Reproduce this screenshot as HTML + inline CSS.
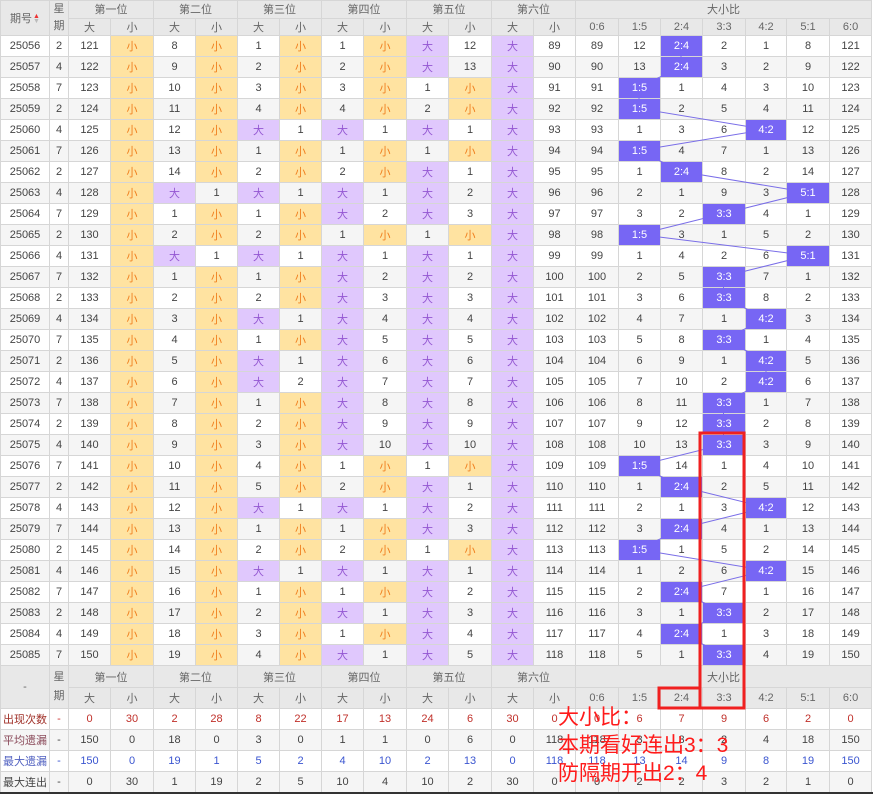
<!DOCTYPE html>
<html><head><meta charset="utf-8">
<style>
html,body{margin:0;padding:0;background:#fff;width:873px;height:794px;overflow:hidden;position:relative}
table{position:absolute;left:0;top:0;width:871px;border-collapse:collapse;table-layout:fixed;font-family:"Liberation Sans","Noto Sans CJK SC",sans-serif;font-size:11px;color:#444}
td{border:1px solid #d6d6d6;text-align:center;padding:0;height:20px;overflow:hidden;white-space:nowrap}
tr.hd td{background:#e8e8e8;color:#666;height:16px}
tr.hd2 td{background:#e8e8e8;color:#666;height:16px}
tr.bh td{background:#e8e8e8;color:#666;height:21px}
tr.bh2 td{background:#e8e8e8;color:#666;height:20px}
tbody.d tr:nth-child(even) td{background:#f5f5f5}
tbody.d tr td.s{background:#ffe3a1;color:#f08020}
tbody.d tr td.b{background:#e0c8fd;color:#9457d2}
tbody.d tr td.h{background:#7766f4;color:#fff;position:relative;z-index:3}
tr.g td{border-top:1px solid #aaa}
col.gl{border-left:1px solid #b8b8b8}
tr.st td{height:20px}
tr.st:nth-child(even) td{background:#f5f5f5}
.r1 td{color:#c0302a}.r1 td:first-child{color:#a03028}
.r2 td:first-child{color:#8a4a5a}
.r3 td{color:#3a55d0}.r3 td:first-child{color:#5060c0}
.dash{color:#c33 !important}
.arr{display:inline-block;vertical-align:middle;margin-left:1px;font-size:7px;line-height:5px;color:#bbb}
.arr b{display:block;color:#e33;font-weight:normal}
</style></head><body>
<table>
<colgroup>
<col style="width:49px"><col class="gl" style="width:19px">
<col class="gl" style="width:42px"><col style="width:43px">
<col class="gl" style="width:42px"><col style="width:42px">
<col class="gl" style="width:42px"><col style="width:42px">
<col class="gl" style="width:42px"><col style="width:43px">
<col class="gl" style="width:42px"><col style="width:43px">
<col class="gl" style="width:42px"><col style="width:42px">
<col class="gl" style="width:43px"><col style="width:42px"><col style="width:42px"><col style="width:43px"><col style="width:41px"><col style="width:43px"><col style="width:42px">
</colgroup>
<tbody>
<tr class="hd"><td rowspan="2">期号<span class="arr"><b>▲</b>▼</span></td><td rowspan="2" style="line-height:17px">星<br>期</td><td colspan="2">第一位</td><td colspan="2">第二位</td><td colspan="2">第三位</td><td colspan="2">第四位</td><td colspan="2">第五位</td><td colspan="2">第六位</td><td colspan="7">大小比</td></tr>
<tr class="hd2"><td>大</td><td>小</td><td>大</td><td>小</td><td>大</td><td>小</td><td>大</td><td>小</td><td>大</td><td>小</td><td>大</td><td>小</td><td>0:6</td><td>1:5</td><td>2:4</td><td>3:3</td><td>4:2</td><td>5:1</td><td>6:0</td></tr>
</tbody>
<tbody class="d">
<tr><td>25056</td><td>2</td><td>121</td><td class="s">小</td><td>8</td><td class="s">小</td><td>1</td><td class="s">小</td><td>1</td><td class="s">小</td><td class="b">大</td><td>12</td><td class="b">大</td><td>89</td><td>89</td><td>12</td><td class="h">2:4</td><td>2</td><td>1</td><td>8</td><td>121</td></tr>
<tr><td>25057</td><td>4</td><td>122</td><td class="s">小</td><td>9</td><td class="s">小</td><td>2</td><td class="s">小</td><td>2</td><td class="s">小</td><td class="b">大</td><td>13</td><td class="b">大</td><td>90</td><td>90</td><td>13</td><td class="h">2:4</td><td>3</td><td>2</td><td>9</td><td>122</td></tr>
<tr><td>25058</td><td>7</td><td>123</td><td class="s">小</td><td>10</td><td class="s">小</td><td>3</td><td class="s">小</td><td>3</td><td class="s">小</td><td>1</td><td class="s">小</td><td class="b">大</td><td>91</td><td>91</td><td class="h">1:5</td><td>1</td><td>4</td><td>3</td><td>10</td><td>123</td></tr>
<tr><td>25059</td><td>2</td><td>124</td><td class="s">小</td><td>11</td><td class="s">小</td><td>4</td><td class="s">小</td><td>4</td><td class="s">小</td><td>2</td><td class="s">小</td><td class="b">大</td><td>92</td><td>92</td><td class="h">1:5</td><td>2</td><td>5</td><td>4</td><td>11</td><td>124</td></tr>
<tr><td>25060</td><td>4</td><td>125</td><td class="s">小</td><td>12</td><td class="s">小</td><td class="b">大</td><td>1</td><td class="b">大</td><td>1</td><td class="b">大</td><td>1</td><td class="b">大</td><td>93</td><td>93</td><td>1</td><td>3</td><td>6</td><td class="h">4:2</td><td>12</td><td>125</td></tr>
<tr class="g"><td>25061</td><td>7</td><td>126</td><td class="s">小</td><td>13</td><td class="s">小</td><td>1</td><td class="s">小</td><td>1</td><td class="s">小</td><td>1</td><td class="s">小</td><td class="b">大</td><td>94</td><td>94</td><td class="h">1:5</td><td>4</td><td>7</td><td>1</td><td>13</td><td>126</td></tr>
<tr><td>25062</td><td>2</td><td>127</td><td class="s">小</td><td>14</td><td class="s">小</td><td>2</td><td class="s">小</td><td>2</td><td class="s">小</td><td class="b">大</td><td>1</td><td class="b">大</td><td>95</td><td>95</td><td>1</td><td class="h">2:4</td><td>8</td><td>2</td><td>14</td><td>127</td></tr>
<tr><td>25063</td><td>4</td><td>128</td><td class="s">小</td><td class="b">大</td><td>1</td><td class="b">大</td><td>1</td><td class="b">大</td><td>1</td><td class="b">大</td><td>2</td><td class="b">大</td><td>96</td><td>96</td><td>2</td><td>1</td><td>9</td><td>3</td><td class="h">5:1</td><td>128</td></tr>
<tr><td>25064</td><td>7</td><td>129</td><td class="s">小</td><td>1</td><td class="s">小</td><td>1</td><td class="s">小</td><td class="b">大</td><td>2</td><td class="b">大</td><td>3</td><td class="b">大</td><td>97</td><td>97</td><td>3</td><td>2</td><td class="h">3:3</td><td>4</td><td>1</td><td>129</td></tr>
<tr><td>25065</td><td>2</td><td>130</td><td class="s">小</td><td>2</td><td class="s">小</td><td>2</td><td class="s">小</td><td>1</td><td class="s">小</td><td>1</td><td class="s">小</td><td class="b">大</td><td>98</td><td>98</td><td class="h">1:5</td><td>3</td><td>1</td><td>5</td><td>2</td><td>130</td></tr>
<tr class="g"><td>25066</td><td>4</td><td>131</td><td class="s">小</td><td class="b">大</td><td>1</td><td class="b">大</td><td>1</td><td class="b">大</td><td>1</td><td class="b">大</td><td>1</td><td class="b">大</td><td>99</td><td>99</td><td>1</td><td>4</td><td>2</td><td>6</td><td class="h">5:1</td><td>131</td></tr>
<tr><td>25067</td><td>7</td><td>132</td><td class="s">小</td><td>1</td><td class="s">小</td><td>1</td><td class="s">小</td><td class="b">大</td><td>2</td><td class="b">大</td><td>2</td><td class="b">大</td><td>100</td><td>100</td><td>2</td><td>5</td><td class="h">3:3</td><td>7</td><td>1</td><td>132</td></tr>
<tr><td>25068</td><td>2</td><td>133</td><td class="s">小</td><td>2</td><td class="s">小</td><td>2</td><td class="s">小</td><td class="b">大</td><td>3</td><td class="b">大</td><td>3</td><td class="b">大</td><td>101</td><td>101</td><td>3</td><td>6</td><td class="h">3:3</td><td>8</td><td>2</td><td>133</td></tr>
<tr><td>25069</td><td>4</td><td>134</td><td class="s">小</td><td>3</td><td class="s">小</td><td class="b">大</td><td>1</td><td class="b">大</td><td>4</td><td class="b">大</td><td>4</td><td class="b">大</td><td>102</td><td>102</td><td>4</td><td>7</td><td>1</td><td class="h">4:2</td><td>3</td><td>134</td></tr>
<tr><td>25070</td><td>7</td><td>135</td><td class="s">小</td><td>4</td><td class="s">小</td><td>1</td><td class="s">小</td><td class="b">大</td><td>5</td><td class="b">大</td><td>5</td><td class="b">大</td><td>103</td><td>103</td><td>5</td><td>8</td><td class="h">3:3</td><td>1</td><td>4</td><td>135</td></tr>
<tr class="g"><td>25071</td><td>2</td><td>136</td><td class="s">小</td><td>5</td><td class="s">小</td><td class="b">大</td><td>1</td><td class="b">大</td><td>6</td><td class="b">大</td><td>6</td><td class="b">大</td><td>104</td><td>104</td><td>6</td><td>9</td><td>1</td><td class="h">4:2</td><td>5</td><td>136</td></tr>
<tr><td>25072</td><td>4</td><td>137</td><td class="s">小</td><td>6</td><td class="s">小</td><td class="b">大</td><td>2</td><td class="b">大</td><td>7</td><td class="b">大</td><td>7</td><td class="b">大</td><td>105</td><td>105</td><td>7</td><td>10</td><td>2</td><td class="h">4:2</td><td>6</td><td>137</td></tr>
<tr><td>25073</td><td>7</td><td>138</td><td class="s">小</td><td>7</td><td class="s">小</td><td>1</td><td class="s">小</td><td class="b">大</td><td>8</td><td class="b">大</td><td>8</td><td class="b">大</td><td>106</td><td>106</td><td>8</td><td>11</td><td class="h">3:3</td><td>1</td><td>7</td><td>138</td></tr>
<tr><td>25074</td><td>2</td><td>139</td><td class="s">小</td><td>8</td><td class="s">小</td><td>2</td><td class="s">小</td><td class="b">大</td><td>9</td><td class="b">大</td><td>9</td><td class="b">大</td><td>107</td><td>107</td><td>9</td><td>12</td><td class="h">3:3</td><td>2</td><td>8</td><td>139</td></tr>
<tr><td>25075</td><td>4</td><td>140</td><td class="s">小</td><td>9</td><td class="s">小</td><td>3</td><td class="s">小</td><td class="b">大</td><td>10</td><td class="b">大</td><td>10</td><td class="b">大</td><td>108</td><td>108</td><td>10</td><td>13</td><td class="h">3:3</td><td>3</td><td>9</td><td>140</td></tr>
<tr class="g"><td>25076</td><td>7</td><td>141</td><td class="s">小</td><td>10</td><td class="s">小</td><td>4</td><td class="s">小</td><td>1</td><td class="s">小</td><td>1</td><td class="s">小</td><td class="b">大</td><td>109</td><td>109</td><td class="h">1:5</td><td>14</td><td>1</td><td>4</td><td>10</td><td>141</td></tr>
<tr><td>25077</td><td>2</td><td>142</td><td class="s">小</td><td>11</td><td class="s">小</td><td>5</td><td class="s">小</td><td>2</td><td class="s">小</td><td class="b">大</td><td>1</td><td class="b">大</td><td>110</td><td>110</td><td>1</td><td class="h">2:4</td><td>2</td><td>5</td><td>11</td><td>142</td></tr>
<tr><td>25078</td><td>4</td><td>143</td><td class="s">小</td><td>12</td><td class="s">小</td><td class="b">大</td><td>1</td><td class="b">大</td><td>1</td><td class="b">大</td><td>2</td><td class="b">大</td><td>111</td><td>111</td><td>2</td><td>1</td><td>3</td><td class="h">4:2</td><td>12</td><td>143</td></tr>
<tr><td>25079</td><td>7</td><td>144</td><td class="s">小</td><td>13</td><td class="s">小</td><td>1</td><td class="s">小</td><td>1</td><td class="s">小</td><td class="b">大</td><td>3</td><td class="b">大</td><td>112</td><td>112</td><td>3</td><td class="h">2:4</td><td>4</td><td>1</td><td>13</td><td>144</td></tr>
<tr><td>25080</td><td>2</td><td>145</td><td class="s">小</td><td>14</td><td class="s">小</td><td>2</td><td class="s">小</td><td>2</td><td class="s">小</td><td>1</td><td class="s">小</td><td class="b">大</td><td>113</td><td>113</td><td class="h">1:5</td><td>1</td><td>5</td><td>2</td><td>14</td><td>145</td></tr>
<tr class="g"><td>25081</td><td>4</td><td>146</td><td class="s">小</td><td>15</td><td class="s">小</td><td class="b">大</td><td>1</td><td class="b">大</td><td>1</td><td class="b">大</td><td>1</td><td class="b">大</td><td>114</td><td>114</td><td>1</td><td>2</td><td>6</td><td class="h">4:2</td><td>15</td><td>146</td></tr>
<tr><td>25082</td><td>7</td><td>147</td><td class="s">小</td><td>16</td><td class="s">小</td><td>1</td><td class="s">小</td><td>1</td><td class="s">小</td><td class="b">大</td><td>2</td><td class="b">大</td><td>115</td><td>115</td><td>2</td><td class="h">2:4</td><td>7</td><td>1</td><td>16</td><td>147</td></tr>
<tr><td>25083</td><td>2</td><td>148</td><td class="s">小</td><td>17</td><td class="s">小</td><td>2</td><td class="s">小</td><td class="b">大</td><td>1</td><td class="b">大</td><td>3</td><td class="b">大</td><td>116</td><td>116</td><td>3</td><td>1</td><td class="h">3:3</td><td>2</td><td>17</td><td>148</td></tr>
<tr><td>25084</td><td>4</td><td>149</td><td class="s">小</td><td>18</td><td class="s">小</td><td>3</td><td class="s">小</td><td>1</td><td class="s">小</td><td class="b">大</td><td>4</td><td class="b">大</td><td>117</td><td>117</td><td>4</td><td class="h">2:4</td><td>1</td><td>3</td><td>18</td><td>149</td></tr>
<tr><td>25085</td><td>7</td><td>150</td><td class="s">小</td><td>19</td><td class="s">小</td><td>4</td><td class="s">小</td><td class="b">大</td><td>1</td><td class="b">大</td><td>5</td><td class="b">大</td><td>118</td><td>118</td><td>5</td><td>1</td><td class="h">3:3</td><td>4</td><td>19</td><td>150</td></tr>
</tbody>
<tbody>
<tr class="bh g"><td rowspan="2">-</td><td rowspan="2" style="line-height:19px">星<br>期</td><td colspan="2">第一位</td><td colspan="2">第二位</td><td colspan="2">第三位</td><td colspan="2">第四位</td><td colspan="2">第五位</td><td colspan="2">第六位</td><td colspan="7">大小比</td></tr>
<tr class="bh2"><td>大</td><td>小</td><td>大</td><td>小</td><td>大</td><td>小</td><td>大</td><td>小</td><td>大</td><td>小</td><td>大</td><td>小</td><td>0:6</td><td>1:5</td><td>2:4</td><td>3:3</td><td>4:2</td><td>5:1</td><td>6:0</td></tr>
<tr class="st r1"><td>出现次数</td><td class="dash">-</td><td>0</td><td>30</td><td>2</td><td>28</td><td>8</td><td>22</td><td>17</td><td>13</td><td>24</td><td>6</td><td>30</td><td>0</td><td>0</td><td>6</td><td>7</td><td>9</td><td>6</td><td>2</td><td>0</td></tr>
<tr class="st r2"><td>平均遗漏</td><td>-</td><td>150</td><td>0</td><td>18</td><td>0</td><td>3</td><td>0</td><td>1</td><td>1</td><td>0</td><td>6</td><td>0</td><td>118</td><td>118</td><td>3</td><td>3</td><td>2</td><td>4</td><td>18</td><td>150</td></tr>
<tr class="st r3"><td>最大遗漏</td><td>-</td><td>150</td><td>0</td><td>19</td><td>1</td><td>5</td><td>2</td><td>4</td><td>10</td><td>2</td><td>13</td><td>0</td><td>118</td><td>118</td><td>13</td><td>14</td><td>9</td><td>8</td><td>19</td><td>150</td></tr>
<tr class="st r4"><td>最大连出</td><td>-</td><td>0</td><td>30</td><td>1</td><td>19</td><td>2</td><td>5</td><td>10</td><td>4</td><td>10</td><td>2</td><td>30</td><td>0</td><td>0</td><td>2</td><td>2</td><td>3</td><td>2</td><td>1</td><td>0</td></tr>
</tbody>
</table>
<svg width="873" height="794" style="position:absolute;left:0;top:0;z-index:1" xmlns="http://www.w3.org/2000/svg">
<polyline fill="none" stroke="#7a6ee8" stroke-width="1" points="681,45.5 681,66.5 639,87.5 639,108.5 766,129.5 639,150.5 681,171.5 808,192.5 723.5,213.5 639,234.5 808,255.5 723.5,276.5 723.5,297.5 766,318.5 723.5,339.5 766,360.5 766,381.5 723.5,402.5 723.5,423.5 723.5,444.5 639,465.5 681,486.5 766,507.5 681,528.5 639,549.5 766,570.5 681,591.5 723.5,612.5 681,633.5 723.5,654.5"/>
</svg>
<svg width="873" height="794" style="position:absolute;left:0;top:0;z-index:5" xmlns="http://www.w3.org/2000/svg">
<rect x="700" y="433" width="44" height="275" fill="none" stroke="#f02020" stroke-width="3"/>
<rect x="659" y="688" width="41" height="20" fill="none" stroke="#f02020" stroke-width="3"/>
<rect x="0" y="792" width="873" height="2" fill="#333"/>
</svg>
<div style="position:absolute;z-index:6;left:558px;top:704px;font-family:'Liberation Sans','Noto Sans CJK SC',sans-serif;font-size:21px;line-height:28px;color:#ff1a1a;white-space:nowrap">大小比：<br>本期看好连出3：3<br>防隔期开出2：4</div>
</body></html>
